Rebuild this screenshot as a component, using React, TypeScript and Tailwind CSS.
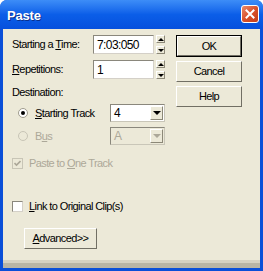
import React from "react";

const font = { fontFamily: '"Liberation Sans", Arial, sans-serif' };

function Spinner() {
  return (
    <div className="ml-[2px] flex h-[19px] w-[9px] flex-col justify-between">
      <div className="flex h-[8px] items-center justify-center border-t border-l border-t-white border-l-white border-r border-b border-r-[#8c8878] border-b-[#8c8878] bg-[#ece9d8]">
        <div className="h-0 w-0 border-x-[3px] border-b-[3px] border-x-transparent border-b-black" />
      </div>
      <div className="flex h-[8px] items-center justify-center border-t border-l border-t-white border-l-white border-r border-b border-r-[#8c8878] border-b-[#8c8878] bg-[#ece9d8]">
        <div className="h-0 w-0 border-x-[3px] border-t-[3px] border-x-transparent border-t-black" />
      </div>
    </div>
  );
}

function Btn({ children, def, className = "" }: { children: React.ReactNode; def?: boolean; className?: string }) {
  return (
    <div className={`${def ? "border border-black" : ""} ${className}`}>
      <div className="flex h-full w-full items-center justify-center border-t border-l border-t-white border-l-white border-r border-b border-r-[#716f64] border-b-[#716f64] bg-[#ece9d8] text-[11px] text-black">
        {children}
      </div>
    </div>
  );
}

function Combo({ value, disabled }: { value: string; disabled?: boolean }) {
  return (
    <div
      className={`ml-auto flex h-[18px] w-[55px] items-center border border-t-[#8a877c] border-l-[#8a877c] border-r-[#c9c6b8] border-b-[#c9c6b8] ${
        disabled ? "bg-[#ece9d8] text-[#aca899]" : "bg-white text-black"
      }`}
    >
      <span className="flex-1 pl-[3px] text-[12px]">{value}</span>
      <div className="mr-[1px] flex h-[14px] w-[13px] items-center justify-center border-t border-l border-t-white border-l-white border-r border-b border-r-[#8c8878] border-b-[#8c8878] bg-[#ece9d8]">
        <div
          className={`h-0 w-0 border-x-[4px] border-t-[4px] border-x-transparent ${
            disabled ? "border-t-[#aca899]" : "border-t-black"
          }`}
        />
      </div>
    </div>
  );
}

export default function App() {
  return (
    <div className="flex h-[271px] w-[263px] flex-col overflow-hidden rounded-t-[7px] bg-[#0a4fd8]" style={font}>
      {/* Title bar */}
      <div className="flex h-[29px] items-start bg-gradient-to-b from-[#3d8df7] via-[#0b5ee8] to-[#0650dd] pl-[7px] pr-[4px] pt-[4px]">
        <span className="mt-[2px] text-[13px] font-bold tracking-[-0.2px] text-white [text-shadow:1px_1px_0_#0a2f8c]">Paste</span>
        <div className="ml-auto mt-[1px] flex h-[18px] w-[18px] items-center justify-center rounded-[3px] border border-white bg-gradient-to-br from-[#e98a6a] via-[#d9502a] to-[#c23d18]">
          <svg width="10" height="10" viewBox="0 0 10 10">
            <path d="M1.5 1.5 L8.5 8.5 M8.5 1.5 L1.5 8.5" stroke="white" strokeWidth="2" strokeLinecap="square" />
          </svg>
        </div>
      </div>

      {/* Body */}
      <div className="mx-[3px] flex flex-1 bg-[#ece9d8] pl-[9px] pt-[6px] text-[11px] tracking-[-0.6px] text-black">
        <div className="flex w-[153px] flex-col">
          <div className="flex h-[19px] items-center">
            <span className="w-[81px]">
              Starting a <u>T</u>ime:
            </span>
            <div className="flex h-[19px] w-[61px] items-center border border-t-[#8a877c] border-l-[#8a877c] border-r-[#d4d0c8] border-b-[#d4d0c8] bg-white pl-[3px] text-[12px]">
              7:03:050
            </div>
            <Spinner />
          </div>
          <div className="mt-[6px] flex h-[19px] items-center">
            <span className="w-[81px]">
              <u>R</u>epetitions:
            </span>
            <div className="flex h-[19px] w-[61px] items-center border border-t-[#8a877c] border-l-[#8a877c] border-r-[#d4d0c8] border-b-[#d4d0c8] bg-white pl-[3px] text-[12px]">
              1
            </div>
            <Spinner />
          </div>
          <div className="mt-[7px] h-[13px] leading-[13px]">Destination:</div>
          <div className="mt-[5px] flex h-[18px] items-center pl-[6px]">
            <div className="flex h-[10px] w-[10px] items-center justify-center rounded-full border border-[#a09c8e] bg-white">
              <div className="h-[4px] w-[4px] rounded-full bg-black" />
            </div>
            <span className="ml-[7px]">
              <u>S</u>tarting Track
            </span>
            <Combo value="4" />
          </div>
          <div className="mt-[5px] flex h-[18px] items-center pl-[6px]">
            <div className="h-[10px] w-[10px] rounded-full border border-[#c8c5b6] bg-[#ece9d8]" />
            <span className="ml-[7px] text-[#aca899]">
              B<u>u</u>s
            </span>
            <Combo value="A" disabled />
          </div>
          <div className="mt-[12px] flex h-[12px] items-center">
            <div className="flex h-[11px] w-[11px] items-center justify-center border border-[#c8c5b6] bg-[#ece9d8]">
              <svg width="7" height="7" viewBox="0 0 7 7">
                <path d="M0.5 3 L2.5 5 L6.5 1" stroke="#aca899" strokeWidth="1.6" fill="none" />
              </svg>
            </div>
            <span className="ml-[6px] text-[#aca899]">
              Paste to <u>O</u>ne Track
            </span>
          </div>
          <div className="mt-[31px] flex h-[12px] items-center">
            <div className="h-[11px] w-[11px] border border-t-[#8a877c] border-l-[#8a877c] border-r-[#d4d0c8] border-b-[#d4d0c8] bg-white" />
            <span className="ml-[6px]">
              <u>L</u>ink to Original Clip(s)
            </span>
          </div>
          <Btn className="ml-[12px] mt-[16px] h-[21px] w-[73px]">
            <span>
              <u>A</u>dvanced&gt;&gt;
            </span>
          </Btn>
        </div>
        <div className="ml-[11px] flex flex-col">
          <Btn def className="h-[22px] w-[66px]">
            OK
          </Btn>
          <Btn className="mt-[4px] h-[21px] w-[66px]">Cancel</Btn>
          <Btn className="mt-[4px] h-[21px] w-[66px]">Help</Btn>
        </div>
      </div>
      <div className="mx-[3px] h-[3px] bg-[#d6d2c2]" />
      <div className="mx-[3px] h-[5px] bg-[#b9b5a5]" />
      <div className="h-[3px]" />
    </div>
  );
}
